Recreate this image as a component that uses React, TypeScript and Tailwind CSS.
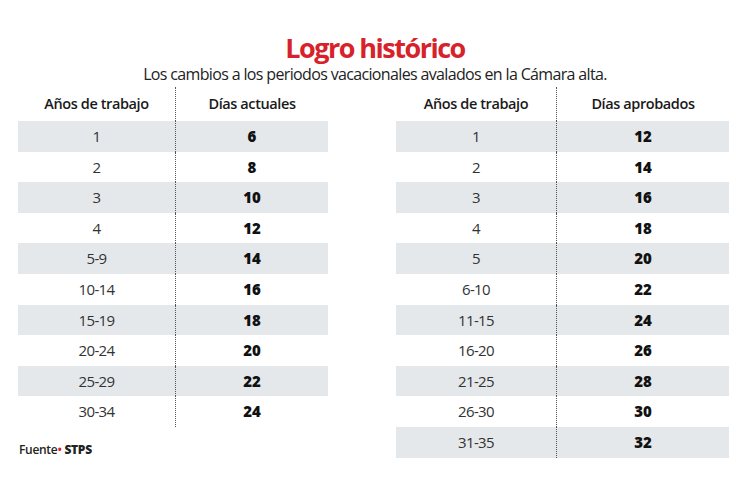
const actuales: [string, string][] = [
  ['1', '6'],
  ['2', '8'],
  ['3', '10'],
  ['4', '12'],
  ['5-9', '14'],
  ['10-14', '16'],
  ['15-19', '18'],
  ['20-24', '20'],
  ['25-29', '22'],
  ['30-34', '24'],
];

const aprobados: [string, string][] = [
  ['1', '12'],
  ['2', '14'],
  ['3', '16'],
  ['4', '18'],
  ['5', '20'],
  ['6-10', '22'],
  ['11-15', '24'],
  ['16-20', '26'],
  ['21-25', '28'],
  ['26-30', '30'],
  ['31-35', '32'],
];

interface TablaProps {
  titulo: string;
  filas: [string, string][];
  anchoCol1: string;
  anchoCol2: string;
}

function Tabla({ titulo, filas, anchoCol1, anchoCol2 }: TablaProps) {
  return (
    <div className="flex flex-col">
      <div className="flex h-[34px] items-center text-[14.5px] font-semibold tracking-[-0.4px] text-[#1a1a1a]">
        <div className={`${anchoCol1} text-center`}>Años de trabajo</div>
        <div className={`${anchoCol2} flex items-center justify-center self-stretch border-l border-dotted border-[#555]`}>{titulo}</div>
      </div>
      {filas.map(([anos, dias], i) => (
        <div key={anos} className={`flex h-[30.6px] items-center ${i % 2 === 0 ? 'bg-[#e5e8eb]' : ''}`}>
          <div className={`${anchoCol1} text-center text-[15px] tracking-[-0.6px] text-[#333]`}>{anos}</div>
          <div className={`${anchoCol2} flex h-full items-center justify-center border-l border-dotted border-[#555] text-[15px] font-black text-[#111]`}>
            {dias}
          </div>
        </div>
      ))}
    </div>
  );
}

export default function App() {
  return (
    <div className="h-[477px] w-[750px] bg-white font-['Open_Sans',sans-serif] text-[#222]">
      <div className="pt-[32px] text-center">
        <h1 className="text-[27px] font-bold leading-[32px] tracking-[-1.5px] text-[#d7222b]">Logro histórico</h1>
        <p className="mt-[-1px] text-[16px] leading-[22px] tracking-[-0.65px] text-[#222]">
          Los cambios a los periodos vacacionales avalados en la Cámara alta.
        </p>
      </div>
      <div className="mt-[2px] flex items-start pl-[18px]">
        <div className="flex flex-col">
          <Tabla titulo="Días actuales" filas={actuales} anchoCol1="w-[157px]" anchoCol2="w-[153px]" />
          <div className="mt-[14px] pl-px text-[12px] font-semibold tracking-[-0.3px] text-[#222]">
            Fuente<span className="text-[#d7222b]">•</span>
            <span className="font-extrabold"> STPS</span>
          </div>
        </div>
        <div className="ml-[68px]">
          <Tabla titulo="Días aprobados" filas={aprobados} anchoCol1="w-[160px]" anchoCol2="w-[173px]" />
        </div>
      </div>
    </div>
  );
}
